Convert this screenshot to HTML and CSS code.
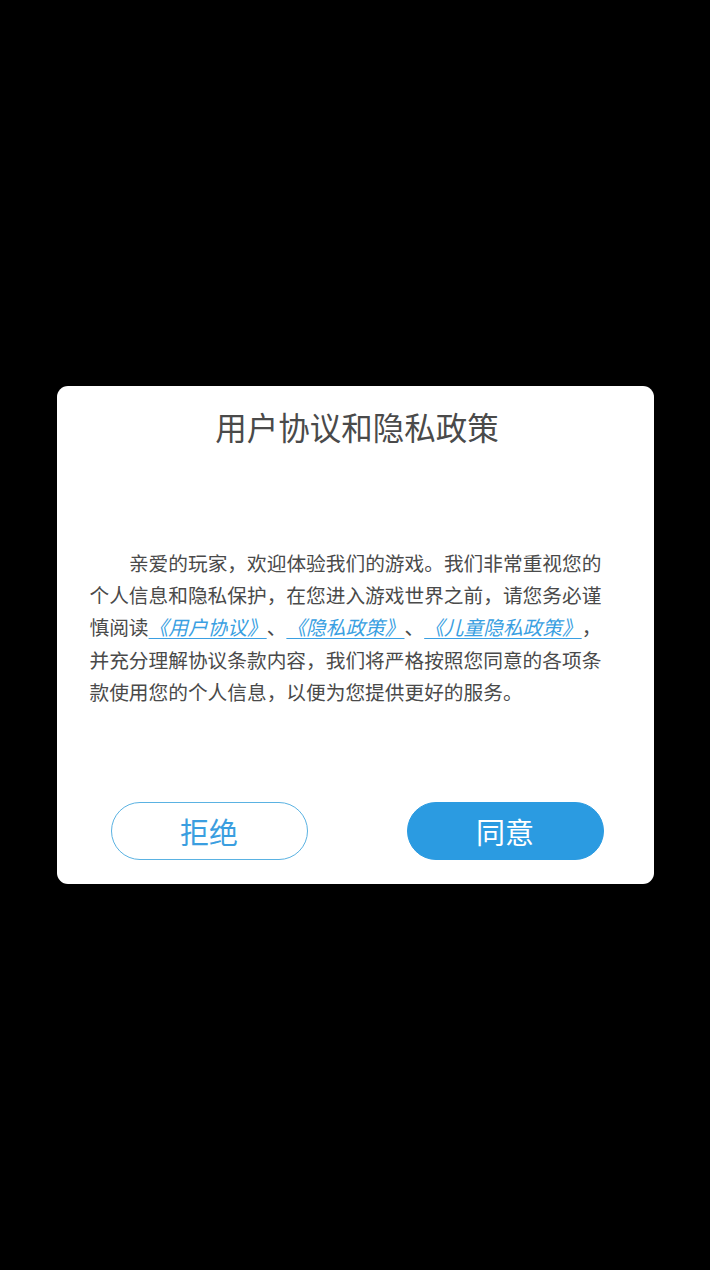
FILE: index.html
```html
<!DOCTYPE html>
<html lang="zh-CN">
<head>
<meta charset="utf-8">
<title>用户协议和隐私政策</title>
<link rel="stylesheet" href="styles.css">
</head>
<body>
<div class="screen">
  <div class="dialog">
    <h1 class="title">用户协议和隐私政策</h1>
    <p class="content">亲爱的玩家，欢迎体验我们的游戏。我们非常重视您的个人信息和隐私保护，在您进入游戏世界之前，请您务必谨慎阅读<a class="link" href="#">《用户协议》</a>、<a class="link" href="#">《隐私政策》</a>、<a class="link" href="#">《儿童隐私政策》</a>，并充分理解协议条款内容，我们将严格按照您同意的各项条款使用您的个人信息，以便为您提供更好的服务。</p>
    <div class="actions">
      <button class="btn btn-reject">拒绝</button>
      <button class="btn btn-agree">同意</button>
    </div>
  </div>
</div>
</body>
</html>
```

FILE: styles.css
```css
html, body {
  margin: 0;
  padding: 0;
  background: #000;
}
body {
  font-family: "Noto Sans CJK SC", "Noto Sans", sans-serif;
  text-spacing-trim: space-all;
}
.screen {
  width: 710px;
  height: 1270px;
  display: flex;
  align-items: center;
  justify-content: center;
}
.dialog {
  width: 597px;
  height: 498px;
  box-sizing: border-box;
  background: #fff;
  border-radius: 11px;
  padding: 20px 33px 24px;
  display: flex;
  flex-direction: column;
}
.title {
  margin: 0;
  font-size: 31.5px;
  line-height: 40px;
  font-weight: 400;
  color: #4a4a4a;
  text-align: center;
  padding-left: 4px;
}
.content {
  margin: 101px 0 0;
  font-size: 19.7px;
  line-height: 32.2px;
  color: #4a4a4a;
  text-indent: 2em;
  text-spacing-trim: space-all;
}
.link {
  color: #3a9fe2;
  text-decoration: underline;
  text-decoration-thickness: 1px;
  text-underline-offset: 3px;
  font-style: italic;
}
.actions {
  margin-top: auto;
  display: flex;
  gap: 99px;
  padding-left: 21px;
}
.btn {
  width: 197px;
  height: 58px;
  border-radius: 29px;
  font-family: "Noto Sans CJK SC", "Noto Sans", sans-serif;
  font-size: 29px;
  line-height: 1;
  padding: 0;
  cursor: pointer;
}
.btn-reject {
  background: #fff;
  border: 1px solid #5ab2e2;
  color: #3a9ee0;
}
.btn-agree {
  background: #2b9be1;
  border: 1px solid #2b9be1;
  color: #fff;
}
```
